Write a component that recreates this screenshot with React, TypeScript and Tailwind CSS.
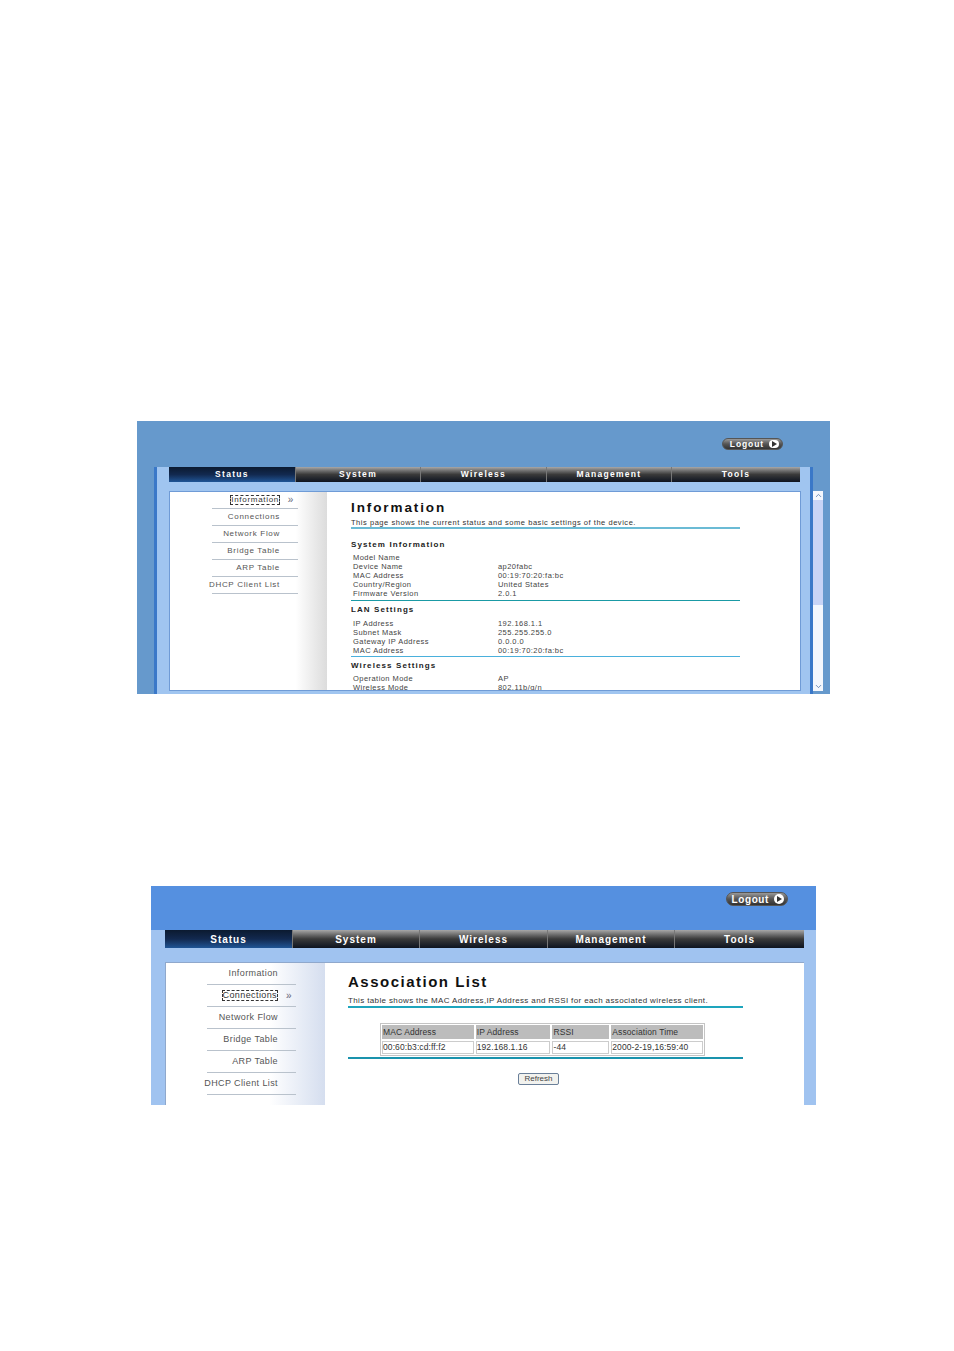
import { ChevronUp, ChevronDown } from "lucide-react"

const tabs = ["Status", "System", "Wireless", "Management", "Tools"]
const menu = ["Information", "Connections", "Network Flow", "Bridge Table", "ARP Table", "DHCP Client List"]

const smallTabs = ["w-[127px]", "w-[125px]", "w-[126px]", "w-[125px]", "w-[128px]"]
const tallTabs = ["w-[128px]", "w-[127px]", "w-[128px]", "w-[127px]", "w-[129px]"]

function Logout({ large }: { large?: boolean }) {
  return (
    <div
      className={`flex items-center justify-end rounded-full border border-[#555] bg-gradient-to-b from-[#9a9a9a] via-[#555] to-[#333] font-bold text-white ${
        large ? "h-[14px] w-[62px] gap-[5px] pr-[3px] text-[10px] tracking-[0.6px]" : "h-[12px] w-[61px] gap-[5px] pr-[3px] text-[8.5px] tracking-[0.9px]"
      }`}
    >
      <span>Logout</span>
      <span className={`flex items-center justify-center rounded-full bg-white ${large ? "h-[10px] w-[10px]" : "h-[8px] w-[10px]"}`}>
        <span className="h-0 w-0 border-y-[3px] border-l-[5px] border-y-transparent border-l-[#333]" />
      </span>
    </div>
  )
}

function Nav({ tall }: { tall?: boolean }) {
  const widths = tall ? tallTabs : smallTabs
  return (
    <div className={`flex ${tall ? "h-[18px] text-[10px] tracking-[1px]" : "h-[15px] text-[8.5px] tracking-[1.3px]"} font-bold text-white`}>
      {tabs.map((t, i) => (
        <div
          key={t}
          className={`flex ${widths[i]} items-center justify-center border-r border-[#777] last:border-r-0 ${
            i === 0
              ? "bg-gradient-to-b from-[#0b1a30] via-[#12294f] to-[#1f5596]"
              : "bg-gradient-to-b from-[#a8a8a8] via-[#3a3a3a] to-[#0e1420]"
          }`}
        >
          {t}
        </div>
      ))}
    </div>
  )
}

function SideMenu({ active, rowH, lineW, small }: { active: number; rowH: string; lineW: string; small?: boolean }) {
  return (
    <div className={`flex flex-col items-start ${small ? "text-[8px] tracking-[0.7px]" : "text-[9px] tracking-[0.4px]"} text-[#555]`}>
      {menu.map((m, i) => (
        <div key={m} className={`relative flex ${rowH} ${lineW} items-center justify-end border-b border-[#b9c2cc] pr-[18px] whitespace-nowrap`}>
          <span className={i === active ? "border border-dashed border-[#333] leading-none text-[#333]" : ""}>{m}</span>
          {i === active && <span className="absolute right-[4px] text-[10px] leading-none text-[#667]">»</span>}
        </div>
      ))}
    </div>
  )
}

function Rows({ rows }: { rows: [string, string][] }) {
  return (
    <div className="ml-[2px] flex flex-col text-[7.5px] leading-[9px] tracking-[0.45px] text-[#444]">
      {rows.map(([k, v]) => (
        <div key={k} className="flex whitespace-nowrap">
          <span className="w-[145px]">{k}</span>
          <span>{v}</span>
        </div>
      ))}
    </div>
  )
}

function SectionTitle({ children }: { children: string }) {
  return <div className="text-[8px] font-bold leading-[10px] tracking-[1.1px] text-[#222]">{children}</div>
}

function FirstShot() {
  return (
    <div className="ml-[137px] flex h-[273px] w-[693px] flex-col overflow-hidden bg-[#6699cc]">
      <div className="flex h-[46px] shrink-0 justify-end pr-[47px] pt-[17px]">
        <Logout />
      </div>
      <div className="flex flex-1 pl-[17px]">
        <div className="h-full w-[659px] border-x-[3px] border-x-[#3a78c8] bg-[#a0c5f0] pl-[12px]">
          <Nav />
          <div className="mt-[9px] flex h-[200px] w-[632px] overflow-hidden border border-[#6f9bd6] bg-white">
            <div className="h-full w-[157px] shrink-0 bg-gradient-to-r from-white from-[80%] to-[#dcdcdc] pl-[42px]">
              <SideMenu active={0} rowH="h-[17px]" lineW="w-[86px]" small />
            </div>
            <div className="flex-1 pl-[24px] pt-[9px]">
              <div className="text-[13.5px] font-bold leading-[14px] tracking-[1.9px] text-[#111]">Information</div>
              <div className="mt-[3px] w-[389px] border-b-2 border-[#6bbbd5] text-[7.5px] leading-[9px] tracking-[0.54px] text-[#333]">
                This page shows the current status and some basic settings of the device.
              </div>
              <div className="mt-[11px]">
                <SectionTitle>System Information</SectionTitle>
              </div>
              <div className="mt-[3px] w-[389px] border-b border-[#1a9aa5] pb-[2px]">
                <Rows
                  rows={[
                    ["Model Name", ""],
                    ["Device Name", "ap20fabc"],
                    ["MAC Address", "00:19:70:20:fa:bc"],
                    ["Country/Region", "United States"],
                    ["Firmware Version", "2.0.1"],
                  ]}
                />
              </div>
              <div className="mt-[4px]">
                <SectionTitle>LAN Settings</SectionTitle>
              </div>
              <div className="mt-[4px] w-[389px] border-b border-[#4ab0dc] pb-[1px]">
                <Rows
                  rows={[
                    ["IP Address", "192.168.1.1"],
                    ["Subnet Mask", "255.255.255.0"],
                    ["Gateway IP Address", "0.0.0.0"],
                    ["MAC Address", "00:19:70:20:fa:bc"],
                  ]}
                />
              </div>
              <div className="mt-[4px]">
                <SectionTitle>Wireless Settings</SectionTitle>
              </div>
              <div className="mt-[3px]">
                <Rows
                  rows={[
                    ["Operation Mode", "AP"],
                    ["Wireless Mode", "802.11b/g/n"],
                  ]}
                />
              </div>
            </div>
          </div>
        </div>
        <div className="mt-[24px] flex h-[200px] w-[10px] flex-col items-center bg-[#f4f7fd]">
          <ChevronUp className="h-[9px] w-[9px] text-[#4a6fa5]" />
          <div className="h-[105px] w-full bg-[#c8d4f6]" />
          <div className="flex-1" />
          <ChevronDown className="h-[9px] w-[9px] text-[#4a6fa5]" />
        </div>
      </div>
    </div>
  )
}

const cols = [
  { w: "w-[92px]", head: "MAC Address", val: "00:60:b3:cd:ff:f2" },
  { w: "w-[75px]", head: "IP Address", val: "192.168.1.16" },
  { w: "w-[57px]", head: "RSSI", val: "-44" },
  { w: "w-[92px]", head: "Association Time", val: "2000-2-19,16:59:40" },
]

function SecondShot() {
  return (
    <div className="ml-[151px] mt-[192px] flex h-[219px] w-[665px] flex-col overflow-hidden bg-[#a0c3f0]">
      <div className="flex h-[44px] shrink-0 justify-end bg-[#5590e0] pr-[28px] pt-[6px]">
        <Logout large />
      </div>
      <div className="pl-[14px]">
        <Nav tall />
        <div className="mt-[14px] flex h-[143px] w-[639px] overflow-hidden border-l border-t border-[#8fa8cc] bg-white">
          <div className="h-full w-[159px] shrink-0 bg-gradient-to-r from-white from-[65%] to-[#d5deef] pl-[41px]">
            <SideMenu active={1} rowH="h-[22px]" lineW="w-[89px]" />
          </div>
          <div className="flex-1 pl-[23px] pt-[10px]">
            <div className="text-[15px] font-bold leading-[17px] tracking-[1.5px] text-[#111]">Association List</div>
            <div className="mt-[6px] w-[395px] border-b-2 border-[#1ea5bd] text-[8px] leading-[10px] tracking-[0.37px] text-[#333]">
              This table shows the MAC Address,IP Address and RSSI for each associated wireless client.
            </div>
            <div className="w-[395px] border-b-2 border-[#1a93ad] pb-[1px] pl-[32px] pt-[15px]">
              <div className="flex w-[325px] flex-col gap-[2px] border border-[#c4c4c4] p-[1px] text-[8.5px] tracking-[0.1px] text-[#333]">
                <div className="flex gap-[2px]">
                  {cols.map((c) => (
                    <div key={c.head} className={`${c.w} flex h-[14px] items-center bg-[#bcbcbc] pl-[1px]`}>
                      {c.head}
                    </div>
                  ))}
                </div>
                <div className="flex gap-[2px]">
                  {cols.map((c) => (
                    <div key={c.head} className={`${c.w} flex h-[13px] items-center border border-[#ccc] whitespace-nowrap`}>
                      {c.val}
                    </div>
                  ))}
                </div>
              </div>
            </div>
            <div className="mt-[14px] flex w-[381px] justify-center">
              <div className="flex h-[12px] w-[41px] items-center justify-center rounded-[2px] border border-[#6a7f99] bg-[#f2f2ee] text-[8px] text-[#444]">
                Refresh
              </div>
            </div>
          </div>
        </div>
      </div>
    </div>
  )
}

export default function App() {
  return (
    <div className="h-[1351px] w-[954px] bg-white pt-[421px] font-['Liberation_Sans',Arial,sans-serif]">
      <FirstShot />
      <SecondShot />
    </div>
  )
}
